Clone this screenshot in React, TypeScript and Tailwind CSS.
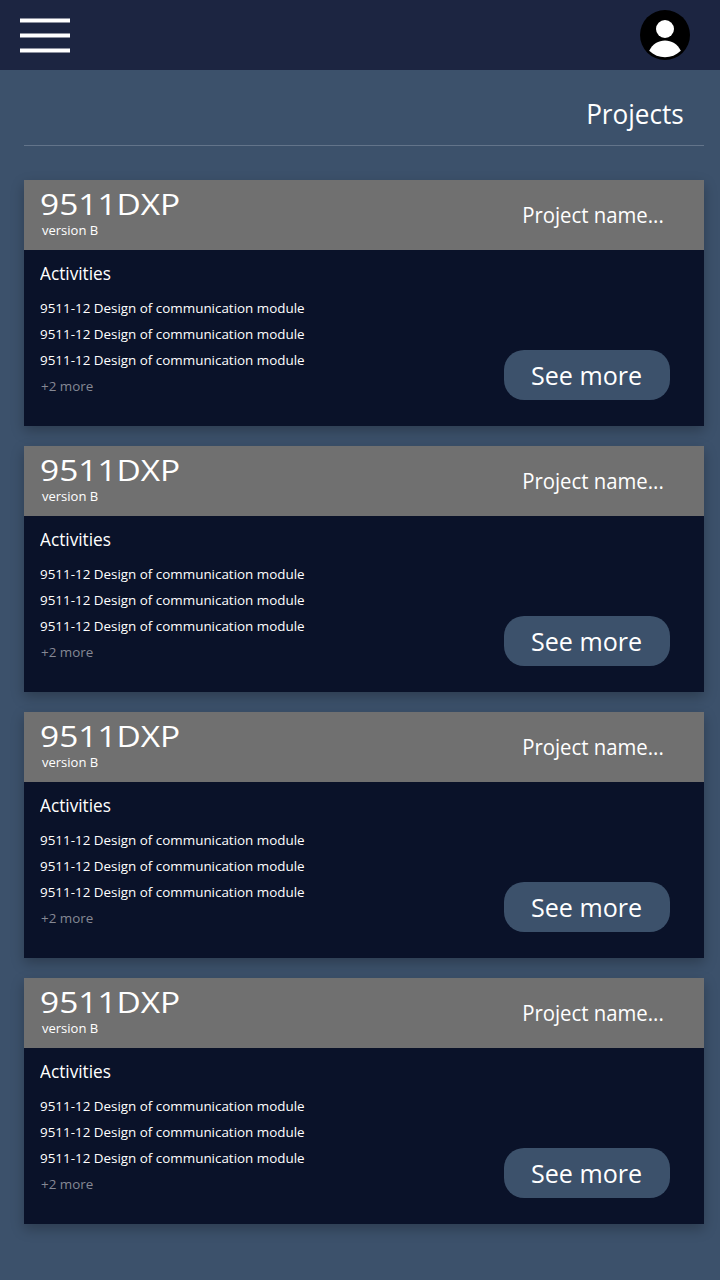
import React from "react";

const activities = [
  "9511-12 Design of communication module",
  "9511-12 Design of communication module",
  "9511-12 Design of communication module",
];

function ProjectCard() {
  return (
    <article className="h-[246px] bg-[#0a1229] shadow-[0_5px_12px_rgba(0,0,0,0.25)]">
      <header className="flex h-[70px] justify-between bg-[#707070] pl-4 pr-10">
        <div className="pt-2">
          <h2 className="w-fit origin-left scale-x-[1.115] text-[30px] leading-8">9511DXP</h2>
          <p className="w-fit origin-left scale-x-[0.965] pl-0.5 text-[13.5px] leading-5">version B</p>
        </div>
        <p className="origin-right scale-x-[0.945] text-[21.5px] leading-[70px]">Project name...</p>
      </header>
      <div className="flex justify-between pl-4 pr-[34px]">
        <div className="pt-[11px]">
          <h3 className="w-fit origin-left scale-x-[0.957] text-[18px] leading-6">Activities</h3>
          <ul className="w-fit origin-left scale-x-[0.993] pt-2.5 text-[13.5px] leading-[26px]">
            {activities.map((a, i) => (
              <li key={i}>{a}</li>
            ))}
            <li className="pl-px text-[#858894]">+2 more</li>
          </ul>
        </div>
        <button className="mt-[100px] h-[50px] w-[166px] rounded-[20px] bg-[#3c516b] text-[26px]">
          <span className="-ml-px inline-block scale-x-[0.965] pt-px">See more</span>
        </button>
      </div>
    </article>
  );
}

export default function App() {
  return (
    <div className="h-[1280px] w-[720px] bg-[#3c516b] font-['Open_Sans',sans-serif] text-white">
      <nav className="flex h-[70px] items-center justify-between bg-[#1c2541] pl-5 pr-[30px]">
        <svg width="50" height="36" viewBox="0 0 50 36" stroke="#fff" strokeWidth="4">
          <path d="M0 3.5H50M0 18.5H50M0 33.5H50" />
        </svg>
        <svg width="50" height="50" viewBox="0 0 50 50">
          <circle cx="25" cy="25" r="25" />
          <circle cx="25" cy="19" r="9" fill="#fff" />
          <path d="M9.2 40.8C15.5 27 34.5 27 40.8 40.8C32 49.5 18 49.5 9.2 40.8Z" fill="#fff" />
        </svg>
      </nav>
      <main className="pl-6 pr-4">
        <h1 className="h-[76px] border-b border-[#63748a] pr-5 pt-6 text-right text-[27.5px] leading-10">
          <span className="inline-block origin-right scale-x-[0.95]">Projects</span>
        </h1>
        <section className="flex flex-col gap-5 pt-[34px]">
          <ProjectCard />
          <ProjectCard />
          <ProjectCard />
          <ProjectCard />
        </section>
      </main>
    </div>
  );
}
